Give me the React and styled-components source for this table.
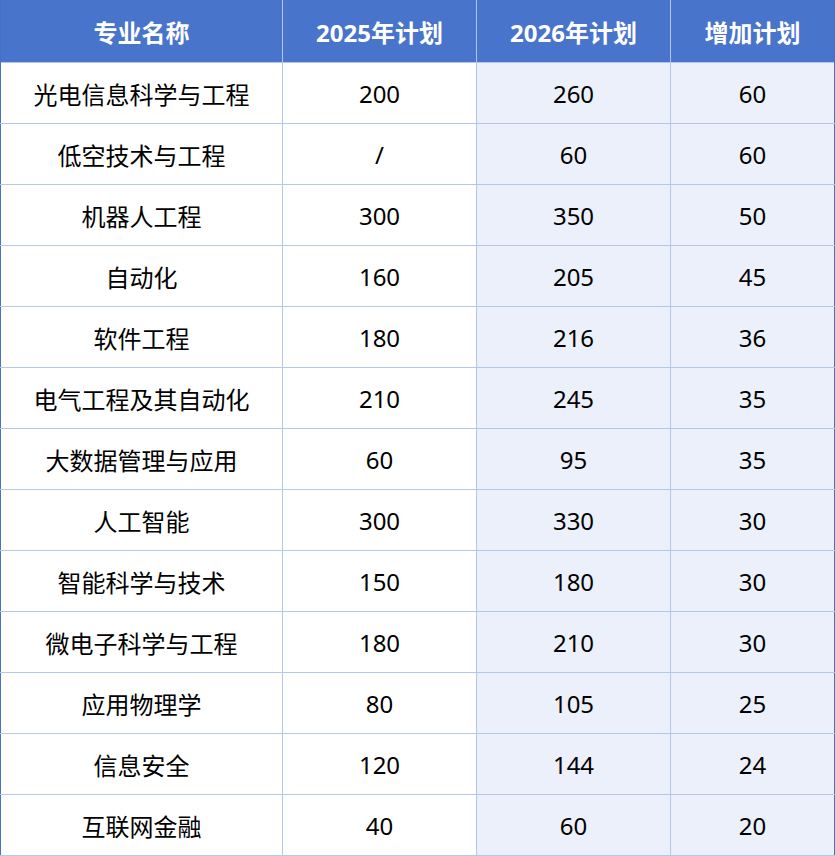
import styled, { createGlobalStyle } from "styled-components";

const rows = [
   ["光电信息科学与工程", "200", "260", "60"],
   ["低空技术与工程", "/", "60", "60"],
   ["机器人工程", "300", "350", "50"],
   ["自动化", "160", "205", "45"],
   ["软件工程", "180", "216", "36"],
   ["电气工程及其自动化", "210", "245", "35"],
   ["大数据管理与应用", "60", "95", "35"],
   ["人工智能", "300", "330", "30"],
   ["智能科学与技术", "150", "180", "30"],
   ["微电子科学与工程", "180", "210", "30"],
   ["应用物理学", "80", "105", "25"],
   ["信息安全", "120", "144", "24"],
   ["互联网金融", "40", "60", "20"],
];

const headers = ["专业名称", "2025年计划", "2026年计划", "增加计划"];
const widths = [282, 194, 194, "auto"];

export default function App() {
   return (
      <>
         <GlobalStyle />
         <Table>
            <colgroup>
               {widths.map((w, i) => (
                  <Col key={i} $w={w} />
               ))}
            </colgroup>
            <thead>
               <tr>
                  {headers.map((h) => (
                     <HeadCell key={h}>{h}</HeadCell>
                  ))}
               </tr>
            </thead>
            <tbody>
               {rows.map((r) => (
                  <Row key={r[0]}>
                     {r.map((v, i) => (
                        <Cell key={i} $shaded={i >= 2}>
                           {v}
                        </Cell>
                     ))}
                  </Row>
               ))}
            </tbody>
         </Table>
      </>
   );
}

const GlobalStyle = createGlobalStyle`
   body {
      margin: 0;
      background: #fff;
      font-family: "Noto Sans", "Noto Sans CJK SC", sans-serif;
   }
`;

const Table = styled.table`
   width: 835px;
   table-layout: fixed;
   border-collapse: collapse;
   border: 1px solid #4472c4;
   border-top: none;
`;

const Col = styled.col`
   width: ${(p) => (p.$w === "auto" ? "auto" : `${p.$w}px`)};
`;

const HeadCell = styled.th`
   height: 62px;
   padding: 0;
   background: #4874cb;
   color: #fff;
   font-size: 24px;
   font-weight: 700;
   text-align: center;
   border-left: 1px solid #b4c6ea;
   &:first-child {
      border-left: none;
   }
`;

const Row = styled.tr`
   height: 61px;
`;

const Cell = styled.td`
   padding: 0;
   font-size: 24px;
   color: #000;
   text-align: center;
   background: ${(p) => (p.$shaded ? "#ebf0fa" : "#fff")};
   border: 1px solid #b4c6ea;
   &:first-child {
      border-left: 1px solid #4472c4;
   }
   &:last-child {
      border-right: 1px solid #4472c4;
   }
`;
